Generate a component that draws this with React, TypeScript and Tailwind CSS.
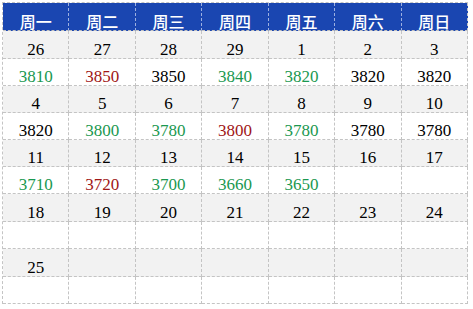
const HEAD = ['周一', '周二', '周三', '周四', '周五', '周六', '周日'];

type Cell = { v: string; c?: 'g' | 'r' };
type Row = { cells: Cell[]; gray: boolean; h: string };

const d = (...xs: string[]): Cell[] => xs.map(v => ({ v }));

const ROWS: Row[] = [
  { cells: d('26', '27', '28', '29', '1', '2', '3'), gray: true, h: 'h-[28px]' },
  {
    cells: [
      { v: '3810', c: 'g' }, { v: '3850', c: 'r' }, { v: '3850' }, { v: '3840', c: 'g' },
      { v: '3820', c: 'g' }, { v: '3820' }, { v: '3820' },
    ],
    gray: false, h: 'h-[27px]',
  },
  { cells: d('4', '5', '6', '7', '8', '9', '10'), gray: true, h: 'h-[27px]' },
  {
    cells: [
      { v: '3820' }, { v: '3800', c: 'g' }, { v: '3780', c: 'g' }, { v: '3800', c: 'r' },
      { v: '3780', c: 'g' }, { v: '3780' }, { v: '3780' },
    ],
    gray: false, h: 'h-[27px]',
  },
  { cells: d('11', '12', '13', '14', '15', '16', '17'), gray: true, h: 'h-[27px]' },
  {
    cells: [
      { v: '3710', c: 'g' }, { v: '3720', c: 'r' }, { v: '3700', c: 'g' }, { v: '3660', c: 'g' },
      { v: '3650', c: 'g' }, { v: '' }, { v: '' },
    ],
    gray: false, h: 'h-[27px]',
  },
  { cells: d('18', '19', '20', '21', '22', '23', '24'), gray: true, h: 'h-[28px]' },
  { cells: d('', '', '', '', '', '', ''), gray: false, h: 'h-[27px]' },
  { cells: d('25', '', '', '', '', '', ''), gray: true, h: 'h-[28px]' },
  { cells: d('', '', '', '', '', '', ''), gray: false, h: 'h-[27px]' },
];

const colorOf = (c?: 'g' | 'r') =>
  c === 'g' ? 'text-[#1a9850]' : c === 'r' ? 'text-[#a01616]' : 'text-black';

export default function App() {
  return (
    <div className="w-[473px] h-[309px] bg-white pt-[2px] pl-[2px]">
      <div className="w-[466px] border-l border-t border-dashed border-[#c4c4c4]">
        {/* header */}
        <div className="grid grid-cols-7 h-[28px] bg-[#1a46b1]">
          {HEAD.map((h, i) => (
            <div
              key={h}
              className={`flex items-end justify-center border-b border-dashed border-b-[#c4c4c4] ${
                i < 6 ? 'border-r border-r-[#9db0e0]' : 'border-r border-r-[#c4c4c4]'
              } text-white text-[16px] leading-[18px] font-medium font-['Noto_Sans_CJK_SC',sans-serif]`}
            >
              {h}
            </div>
          ))}
        </div>

        {ROWS.map((row, ri) => (
          <div key={ri} className={`grid grid-cols-7 ${row.h} ${row.gray ? 'bg-[#f2f2f2]' : 'bg-white'}`}>
            {row.cells.map((cell, ci) => (
              <div
                key={ci}
                className={`flex items-end justify-center border-r border-b border-dashed border-[#c4c4c4] text-[17px] leading-[16px] font-['Liberation_Serif','Times_New_Roman',serif] ${colorOf(cell.c)}`}
              >
                {cell.v}
              </div>
            ))}
          </div>
        ))}
      </div>
    </div>
  );
}
